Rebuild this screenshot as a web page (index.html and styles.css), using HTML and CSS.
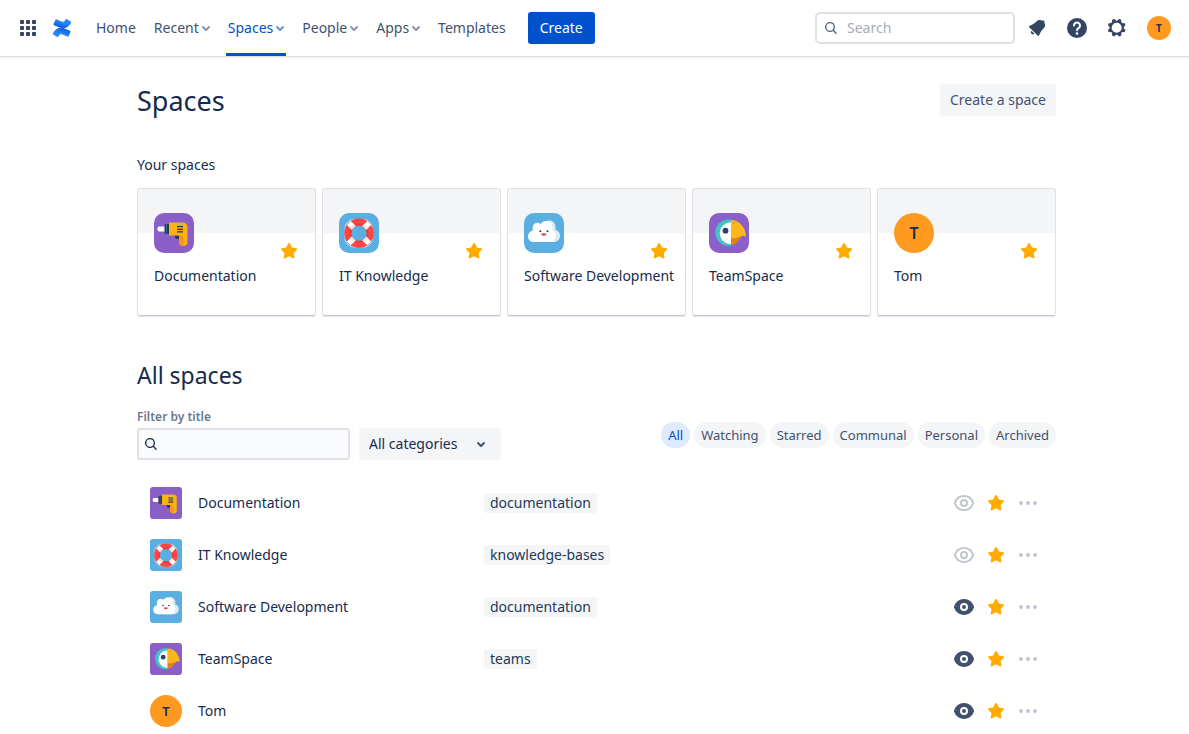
FILE: index.html
```
<!DOCTYPE html>
<html lang="en">
<head>
<meta charset="utf-8">
<meta name="viewport" content="width=device-width, initial-scale=1">
<title>Spaces</title>
<link rel="stylesheet" href="styles.css">
</head>
<body>
<svg class="sprite" aria-hidden="true">
  <defs>
    <linearGradient id="logo-a" x1="1" y1="0" x2="0.3" y2="1"><stop offset="0" stop-color="#0052cc"/><stop offset="0.7" stop-color="#2684ff"/></linearGradient>
    <linearGradient id="logo-b" x1="0" y1="1" x2="0.7" y2="0"><stop offset="0" stop-color="#0052cc"/><stop offset="0.7" stop-color="#2684ff"/></linearGradient>
    <clipPath id="beak-clip"><path d="M22 7c9 0 15 8 15 17-2-2-4-1-5 0-3 4-6 8-10 8z"/></clipPath>
  </defs>
  <symbol id="i-search" viewBox="0 0 24 24"><path d="M16.436 15.085l3.94 4.01a1 1 0 0 1-1.425 1.402l-3.938-4.006a7.5 7.5 0 1 1 1.423-1.406zM10.5 16a5.5 5.5 0 1 0 0-11 5.5 5.5 0 0 0 0 11z"/></symbol>
  <symbol id="i-chevron" viewBox="0 0 24 24"><path d="M8.292 10.293a1.009 1.009 0 0 0 0 1.419l2.939 2.965c.218.215.5.322.779.322s.556-.107.769-.322l2.93-2.955a1.01 1.01 0 0 0 0-1.419.987.987 0 0 0-1.406 0l-2.298 2.317-2.307-2.327a.99.99 0 0 0-1.406 0z"/></symbol>
  <symbol id="i-star" viewBox="0 0 24 24"><path d="M12.072 17.284l-3.905 2.053a1 1 0 0 1-1.451-1.054l.746-4.349-3.16-3.08a1 1 0 0 1 .554-1.705l4.366-.635 1.953-3.956a1 1 0 0 1 1.794 0l1.952 3.956 4.366.635a1 1 0 0 1 .555 1.705l-3.16 3.08.746 4.349a1 1 0 0 1-1.45 1.054l-3.906-2.053z"/></symbol>
  <symbol id="i-watch" viewBox="0 0 24 24"><path d="M12 5c4.300 0 7.700 2.800 8.900 6.500.1.300.1.700 0 1C19.700 16.200 16.300 19 12 19s-7.700-2.800-8.900-6.500c-.1-.3-.1-.7 0-1C4.300 7.800 7.700 5 12 5z" fill="none" stroke="currentColor" stroke-width="2"/><circle cx="12" cy="12" r="3" fill="none" stroke="currentColor" stroke-width="2"/></symbol>
  <symbol id="i-watching" viewBox="0 0 24 24"><path d="M12 4c4.900 0 8.600 3.200 9.900 7.400.1.400.1.800 0 1.200C20.600 16.800 16.900 20 12 20s-8.600-3.200-9.900-7.400c-.1-.4-.1-.8 0-1.200C3.400 7.200 7.100 4 12 4z"/><circle cx="12" cy="12" r="3" fill="none" stroke="#fff" stroke-width="2"/></symbol>
  <symbol id="i-more" viewBox="0 0 24 24"><circle cx="5" cy="12" r="2"/><circle cx="12" cy="12" r="2"/><circle cx="19" cy="12" r="2"/></symbol>

  <symbol id="a-drill" viewBox="0 0 40 40">
    <rect width="40" height="40" fill="#8a5fc8"/>
    <path d="M3 16l1.500-2.400H11v5H4.500z" fill="#fff"/><path d="M5.500 18l2-4M8.500 18l2-4" stroke="#d9d0ea" stroke-width="0.6"/>
    <path d="M10.500 12l1-1H15v10h-3.500l-1-1z" fill="#253858"/><path d="M12.500 11v10" stroke="#3e6288"/>
    <path d="M21 22.500h4V26h-1.500c-1 0-2.500-1-2.500-2z" fill="#253858"/>
    <path d="M15 9.500h14a4.500 4.500 0 0 1 4.500 4.500v15c0 2.500-1.500 4-4 4s-4.500-1.500-4.500-4v-6.500H15z" fill="#fcb211"/>
    <path d="M25 22.500h3.500c1 1 1 3 1 5V33c-2.500 0-4.500-1.500-4.500-4z" fill="#f7941e"/>
    <path d="M23 13.700h6M23 16.300h6M23 18.900h6" stroke="#253858" stroke-width="1.300"/>
  </symbol>
  <symbol id="a-ring" viewBox="0 0 40 40">
    <rect width="40" height="40" fill="#59afe1"/>
    <g fill="none">
      <rect x="6" y="6.500" width="27.500" height="27.500" rx="9" stroke="#c7e5f6" stroke-width="1"/>
      <circle cx="20" cy="20.200" r="11" stroke="#ff4646" stroke-width="7.400"/>
      <circle cx="20" cy="20.200" r="8.500" stroke="#e93c3f" stroke-width="2.400"/>
      <path d="M14.700 14.900l-4.900-4.900M25.300 14.900l4.900-4.900M14.700 25.500l-4.900 4.900M25.300 25.500l4.900 4.900" stroke="#fff" stroke-width="5.500"/>
      <path d="M14.700 14.900l-1.800-1.800M25.300 14.900l1.800-1.800M14.700 25.500l-1.800 1.800M25.300 25.500l1.800 1.800" stroke="#f2dfe1" stroke-width="5.500"/>
    </g>
    <circle cx="20" cy="20.200" r="7.500" fill="#59afe1"/>
  </symbol>
  <symbol id="a-cloud" viewBox="0 0 40 40">
    <rect width="40" height="40" fill="#59afe1"/>
    <path d="M18 12c2-3 5-5 8-4.500 4 .5 6.500 4 5.500 9.500 3 .5 4.500 3 4.500 5.500 0 4-2.500 6.500-6 6.500H18z" fill="#d9eaf5"/>
    <path d="M9.500 29C6 29 4 26 4 23.500c0-3 2-5.500 4.800-5.800C8 13 10 10 13 9.800c1.500 0 2.500.4 3.500 1.200C18.500 8.500 20.500 8 23 8c4.500 0 6 4.500 5.500 9 2.500 1 3.500 3.500 3 6-.5 4-2.500 6-5 6z" fill="#fff"/>
    <circle cx="16.300" cy="18.200" r="1" fill="#253858"/><circle cx="23.500" cy="18.200" r="1" fill="#253858"/>
    <path d="M17.300 20.500h5c0 3-5 3-5 0z" fill="#e5353b"/>
  </symbol>
  <symbol id="a-bird" viewBox="0 0 40 40">
    <rect width="40" height="40" fill="#8a5fc8"/>
    <path d="M22 6.500h-2.500a13.200 13.200 0 0 0 0 26.400H22z" fill="#43c3c4"/>
    <path d="M22 9.500h-1.500a10.800 10.800 0 0 0 0 21.500H22z" fill="#fff"/>
    <path d="M22 7c9 0 15 8 15 17-2-2-4-1-5 0-3 4-6 8-10 8z" fill="#fcb81a"/>
    <path clip-path="url(#beak-clip)" d="M21 24.500c3 1.500 7 1 11-1.500v10H21z" fill="#e27e17"/>
    <circle cx="16.500" cy="17.700" r="2.900" fill="#253f6e"/><circle cx="25" cy="9.800" r="0.900" fill="#ee8a17"/>
  </symbol>
</svg>

<header class="topbar">
  <button class="icon-button" type="button" aria-label="Switch to">
    <svg class="icon-24" viewBox="0 0 24 24"><rect x="4" y="4" width="4" height="4" rx="1"/><rect x="10" y="4" width="4" height="4" rx="1"/><rect x="16" y="4" width="4" height="4" rx="1"/><rect x="4" y="10" width="4" height="4" rx="1"/><rect x="10" y="10" width="4" height="4" rx="1"/><rect x="16" y="10" width="4" height="4" rx="1"/><rect x="4" y="16" width="4" height="4" rx="1"/><rect x="10" y="16" width="4" height="4" rx="1"/><rect x="16" y="16" width="4" height="4" rx="1"/></svg>
  </button>
  <a class="logo" href="#" aria-label="Confluence home">
    <svg class="logo-mark" viewBox="-0.500 -0.500 25 25"><path fill="url(#logo-a)" stroke="url(#logo-a)" stroke-width="1.400" d="M.87 18.257c-.248.382-.53.875-.763 1.245a.764.764 0 0 0 .255 1.040l4.965 3.054a.764.764 0 0 0 1.058-.26c.199-.332.454-.763.733-1.221 1.967-3.247 3.945-2.853 7.508-1.146l4.957 2.337a.764.764 0 0 0 1.028-.382l2.364-5.346a.764.764 0 0 0-.382-1 599.851 599.851 0 0 1-4.965-2.361C10.911 10.970 5.224 11.185.87 18.257z"/><path fill="url(#logo-b)" stroke="url(#logo-b)" stroke-width="1.400" d="M23.131 5.743c.249-.405.531-.875.764-1.250a.764.764 0 0 0-.256-1.034L18.675.404a.764.764 0 0 0-1.058.26c-.195.335-.451.763-.734 1.225-1.966 3.246-3.945 2.850-7.508 1.146L4.437.694a.764.764 0 0 0-1.027.382L1.046 6.422a.764.764 0 0 0 .382 1c1.039.49 3.105 1.467 4.965 2.361 6.698 3.246 12.392 3.029 16.738-4.040z"/></svg>
  </a>
  <nav class="nav" aria-label="Main">
    <a class="nav-item" href="#">Home</a>
    <button class="nav-item" type="button">Recent<svg class="nav-chevron"><use href="#i-chevron"/></svg></button>
    <button class="nav-item nav-item-active" type="button">Spaces<svg class="nav-chevron"><use href="#i-chevron"/></svg></button>
    <button class="nav-item" type="button">People<svg class="nav-chevron"><use href="#i-chevron"/></svg></button>
    <button class="nav-item" type="button">Apps<svg class="nav-chevron"><use href="#i-chevron"/></svg></button>
    <a class="nav-item" href="#">Templates</a>
  </nav>
  <button class="button button-primary" type="button">Create</button>
  <div class="tools">
    <label class="search">
      <svg class="search-icon"><use href="#i-search"/></svg>
      <input class="search-input" type="search" placeholder="Search" aria-label="Search">
    </label>
    <button class="icon-button" type="button" aria-label="Notifications"><svg class="icon-24" viewBox="0 0 24 24"><path d="M6.485 17.669a2 2 0 0 0 2.829 0l-2.829-2.830a2 2 0 0 0 0 2.830zm4.897-12.191l-.725.725c-.782.782-2.210 1.813-3.206 2.311l-3.017 1.509c-.495.248-.584.774-.187 1.171l8.556 8.556c.398.396.922.313 1.171-.188l1.510-3.016c.494-.988 1.526-2.420 2.311-3.206l.725-.726a5.048 5.048 0 0 0 .64-6.356 1.010 1.010 0 1 0-1.354-1.494c-.023.025-.046.049-.066.075a5.043 5.043 0 0 0-2.788-.84 5.036 5.036 0 0 0-3.570 1.478z"/></svg></button>
    <button class="icon-button" type="button" aria-label="Help"><svg class="icon-24" viewBox="0 0 24 24"><circle cx="12" cy="12" r="10"/><path d="M9 9.500a3 3 0 1 1 4.500 2.600c-1 .6-1.500 1-1.500 2.200" fill="none" stroke="#fff" stroke-width="2" stroke-linecap="round"/><circle cx="12" cy="17.500" r="1.300" fill="#fff"/></svg></button>
    <button class="icon-button" type="button" aria-label="Settings"><svg class="icon-24" viewBox="0 0 24 24"><path fill-rule="evenodd" d="M11.701 16.700a5.002 5.002 0 1 1 0-10.003 5.002 5.002 0 0 1 0 10.004m8.368-3.117a1.995 1.995 0 0 1-1.346-1.885c0-.876.563-1.613 1.345-1.885a.48.48 0 0 0 .315-.574 8.947 8.947 0 0 0-.836-1.993.477.477 0 0 0-.598-.195 2.040 2.040 0 0 1-1.290.08 1.988 1.988 0 0 1-1.404-1.395 2.040 2.040 0 0 1 .076-1.297.478.478 0 0 0-.196-.597 8.980 8.980 0 0 0-1.975-.826.479.479 0 0 0-.574.314 1.995 1.995 0 0 1-1.885 1.346 1.994 1.994 0 0 1-1.884-1.345.482.482 0 0 0-.575-.315c-.708.2-1.379.485-2.004.842a.47.47 0 0 0-.198.582A2.002 2.002 0 0 1 4.445 7.060a.478.478 0 0 0-.595.196 8.946 8.946 0 0 0-.833 1.994.48.48 0 0 0 .308.572 1.995 1.995 0 0 1 1.323 1.877c0 .867-.552 1.599-1.324 1.877a.479.479 0 0 0-.308.57 8.990 8.990 0 0 0 .723 1.790.477.477 0 0 0 .624.194c.595-.273 1.343-.264 2.104.238.117.077.225.185.302.3.527.8.512 1.580.198 2.188a.473.473 0 0 0 .168.628 8.946 8.946 0 0 0 2.110.897.474.474 0 0 0 .57-.313 1.995 1.995 0 0 1 1.886-1.353c.878 0 1.618.567 1.887 1.353a.475.475 0 0 0 .57.313 8.964 8.964 0 0 0 2.084-.883.473.473 0 0 0 .167-.631c-.318-.608-.337-1.393.191-2.195.077-.116.185-.225.302-.302.772-.511 1.527-.513 2.125-.23a.477.477 0 0 0 .628-.19 8.925 8.925 0 0 0 .728-1.793.478.478 0 0 0-.314-.573"/></svg></button>
    <button class="profile" type="button" aria-label="Your profile">T</button>
  </div>
</header>

<main class="page">
  <div class="page-head">
    <h1 class="title">Spaces</h1>
    <button class="button" type="button">Create a space</button>
  </div>

  <section>
    <h2 class="subtitle">Your spaces</h2>
    <div class="cards">
      <article class="card">
        <svg class="avatar avatar-card"><use href="#a-drill"/></svg>
        <button class="star card-star" type="button" aria-label="Unstar Documentation"><svg class="icon-24"><use href="#i-star"/></svg></button>
        <a class="card-name" href="#">Documentation</a>
      </article>
      <article class="card">
        <svg class="avatar avatar-card"><use href="#a-ring"/></svg>
        <button class="star card-star" type="button" aria-label="Unstar IT Knowledge"><svg class="icon-24"><use href="#i-star"/></svg></button>
        <a class="card-name" href="#">IT Knowledge</a>
      </article>
      <article class="card">
        <svg class="avatar avatar-card"><use href="#a-cloud"/></svg>
        <button class="star card-star" type="button" aria-label="Unstar Software Development"><svg class="icon-24"><use href="#i-star"/></svg></button>
        <a class="card-name" href="#">Software Development</a>
      </article>
      <article class="card">
        <svg class="avatar avatar-card"><use href="#a-bird"/></svg>
        <button class="star card-star" type="button" aria-label="Unstar TeamSpace"><svg class="icon-24"><use href="#i-star"/></svg></button>
        <a class="card-name" href="#">TeamSpace</a>
      </article>
      <article class="card">
        <span class="avatar avatar-card avatar-letter">T</span>
        <button class="star card-star" type="button" aria-label="Unstar Tom"><svg class="icon-24"><use href="#i-star"/></svg></button>
        <a class="card-name" href="#">Tom</a>
      </article>
    </div>
  </section>

  <section>
    <h2 class="section-title">All spaces</h2>
    <div class="filters">
      <div class="filter-fields">
        <div class="field">
          <label class="field-label" for="title-filter">Filter by title</label>
          <div class="filter-box">
            <svg class="filter-icon"><use href="#i-search"/></svg>
            <input class="filter-input" id="title-filter" type="text">
          </div>
        </div>
        <div class="select-box">
          <select class="select" aria-label="Categories"><option>All categories</option></select>
          <svg class="select-chevron"><use href="#i-chevron"/></svg>
        </div>
      </div>
      <div class="pills">
        <button class="pill pill-active" type="button">All</button>
        <button class="pill" type="button">Watching</button>
        <button class="pill" type="button">Starred</button>
        <button class="pill" type="button">Communal</button>
        <button class="pill" type="button">Personal</button>
        <button class="pill" type="button">Archived</button>
      </div>
    </div>

    <table class="spaces">
      <tbody>
        <tr>
          <td class="cell-avatar"><svg class="avatar avatar-row"><use href="#a-drill"/></svg></td>
          <td class="cell-name"><a href="#">Documentation</a></td>
          <td><a class="tag" href="#">documentation</a></td>
          <td class="cell-actions"><div class="actions"><button class="watch" type="button" aria-label="Watch"><svg class="icon-24"><use href="#i-watch"/></svg></button><button class="star" type="button" aria-label="Unstar"><svg class="icon-24"><use href="#i-star"/></svg></button><button class="more" type="button" aria-label="More"><svg class="icon-24"><use href="#i-more"/></svg></button></div></td>
        </tr>
        <tr>
          <td class="cell-avatar"><svg class="avatar avatar-row"><use href="#a-ring"/></svg></td>
          <td class="cell-name"><a href="#">IT Knowledge</a></td>
          <td><a class="tag" href="#">knowledge-bases</a></td>
          <td class="cell-actions"><div class="actions"><button class="watch" type="button" aria-label="Watch"><svg class="icon-24"><use href="#i-watch"/></svg></button><button class="star" type="button" aria-label="Unstar"><svg class="icon-24"><use href="#i-star"/></svg></button><button class="more" type="button" aria-label="More"><svg class="icon-24"><use href="#i-more"/></svg></button></div></td>
        </tr>
        <tr>
          <td class="cell-avatar"><svg class="avatar avatar-row"><use href="#a-cloud"/></svg></td>
          <td class="cell-name"><a href="#">Software Development</a></td>
          <td><a class="tag" href="#">documentation</a></td>
          <td class="cell-actions"><div class="actions"><button class="watch watch-on" type="button" aria-label="Stop watching"><svg class="icon-24"><use href="#i-watching"/></svg></button><button class="star" type="button" aria-label="Unstar"><svg class="icon-24"><use href="#i-star"/></svg></button><button class="more" type="button" aria-label="More"><svg class="icon-24"><use href="#i-more"/></svg></button></div></td>
        </tr>
        <tr>
          <td class="cell-avatar"><svg class="avatar avatar-row"><use href="#a-bird"/></svg></td>
          <td class="cell-name"><a href="#">TeamSpace</a></td>
          <td><a class="tag" href="#">teams</a></td>
          <td class="cell-actions"><div class="actions"><button class="watch watch-on" type="button" aria-label="Stop watching"><svg class="icon-24"><use href="#i-watching"/></svg></button><button class="star" type="button" aria-label="Unstar"><svg class="icon-24"><use href="#i-star"/></svg></button><button class="more" type="button" aria-label="More"><svg class="icon-24"><use href="#i-more"/></svg></button></div></td>
        </tr>
        <tr>
          <td class="cell-avatar"><span class="avatar avatar-row avatar-letter">T</span></td>
          <td class="cell-name"><a href="#">Tom</a></td>
          <td></td>
          <td class="cell-actions"><div class="actions"><button class="watch watch-on" type="button" aria-label="Stop watching"><svg class="icon-24"><use href="#i-watching"/></svg></button><button class="star" type="button" aria-label="Unstar"><svg class="icon-24"><use href="#i-star"/></svg></button><button class="more" type="button" aria-label="More"><svg class="icon-24"><use href="#i-more"/></svg></button></div></td>
        </tr>
      </tbody>
    </table>
  </section>
</main>
</body>
</html>
```

FILE: styles.css
```
*, *::before, *::after { box-sizing: border-box; }

body {
  margin: 0;
  background: #fff;
  color: #172b4d;
  font: 14px/20px "Droid Sans", "Noto Sans", sans-serif;
}

button, input, select {
  margin: 0;
  border: 0;
  padding: 0;
  background: none;
  color: inherit;
  font: inherit;
}

button { cursor: pointer; }
a { color: inherit; text-decoration: none; }
h1, h2 { margin: 0; font-weight: 400; }
svg { display: block; fill: currentColor; }

.sprite { position: absolute; width: 0; height: 0; }
.icon-24 { width: 24px; height: 24px; }

/* Top bar */
.topbar {
  display: flex;
  align-items: center;
  height: 56px;
  padding: 0 18px 0 12px;
  background: #fff;
  box-shadow: 0 1px 1px #dcdfe5, 0 2px 3px #eef0f3;
  color: #344563;
}

.icon-button {
  display: grid;
  place-items: center;
  width: 32px;
  height: 32px;
}

.logo { margin-left: 9px; }
.logo-mark { width: 18px; height: 18px; }

.nav {
  display: flex;
  align-self: stretch;
  gap: 14px;
  margin-left: 23px;
}

.nav-item {
  display: flex;
  align-items: center;
  padding: 0 2px;
  color: #42526e;
}

.nav-item-active {
  color: #0052cc;
  box-shadow: inset 0 -3px #0052cc;
}

.nav-chevron {
  width: 24px;
  height: 24px;
  margin: 0 -8px 0 -5px;
  opacity: 0.6;
}

.button {
  height: 32px;
  padding: 0 10px;
  border-radius: 3px;
  background: #f4f5f7;
  color: #42526e;
}

.button-primary {
  margin-left: 20px;
  padding: 0 12px;
  background: #0052cc;
  color: #fff;
}

.tools {
  display: flex;
  align-items: center;
  gap: 8px;
  margin-left: auto;
}

.search {
  display: flex;
  align-items: center;
  width: 200px;
  height: 32px;
  margin-right: -2px;
  border: 2px solid #dfe1e6;
  border-radius: 5px;
  padding-left: 6px;
}

.search-icon { width: 16px; height: 16px; color: #505f79; }
.search-input { flex: 1; min-width: 0; padding-left: 8px; outline: 0; }
.search-input::placeholder { color: #a5adba; opacity: 1; }

.profile {
  width: 24px;
  height: 24px;
  margin-left: 6px;
  border-radius: 50%;
  background: #ff991f;
  color: #253858;
  font-size: 10px;
  font-weight: 700;
  line-height: 24px;
}

/* Page */
.page {
  max-width: 923px;
  margin: 0 auto;
  padding: 28px 0 0 4px;
}

.page-head {
  display: flex;
  align-items: flex-start;
  justify-content: space-between;
}

.title { font-size: 27px; line-height: 34px; }
.subtitle { margin: 37px 0 13px; font-size: 14px; line-height: 20px; }
.section-title { margin: 43px 0 18px; font-size: 23px; line-height: 32px; }

/* Space cards */
.cards {
  display: grid;
  grid-template-columns: repeat(5, 1fr);
  gap: 6px;
}

.card {
  display: grid;
  grid-template-columns: 1fr auto;
  align-content: start;
  min-height: 128px;
  border: 1px solid #dfe1e6;
  border-bottom-color: #c1c7d0;
  border-radius: 3px;
  padding: 24px 14px 16px 16px;
  background: linear-gradient(#f4f5f7 44px, #fff 44px);
  box-shadow: 0 1px 1px #e3e6ea;
}

.card-star { align-self: end; margin-bottom: -10px; }
.card-name { grid-column: 1 / -1; margin-top: 13px; white-space: nowrap; }
.star { color: #ffab00; }

.avatar { overflow: hidden; }
.avatar-card { width: 40px; height: 40px; border-radius: 10px; font-size: 16px; line-height: 40px; }
.avatar-row { width: 32px; height: 32px; border-radius: 3px; font-size: 13px; line-height: 32px; }

.avatar-letter {
  display: block;
  border-radius: 50%;
  background: #ff991f;
  font-weight: 600;
  text-align: center;
}

/* Filters */
.filters {
  display: flex;
  align-items: center;
  justify-content: space-between;
}

.filter-fields {
  display: flex;
  align-items: flex-end;
  gap: 9px;
}

.field-label {
  display: block;
  margin-bottom: 3px;
  color: #6b778c;
  font-size: 12px;
  font-weight: 600;
  line-height: 16px;
}

.filter-box {
  display: flex;
  align-items: center;
  width: 213px;
  height: 32px;
  border: 2px solid #dfe1e6;
  border-radius: 3px;
  padding-left: 4px;
  background: #fafbfc;
}

.filter-icon { width: 16px; height: 16px; }
.filter-input { flex: 1; min-width: 0; padding: 0 6px; outline: 0; }

.select-box {
  display: grid;
  grid-template-columns: 1fr 32px;
  align-items: center;
  width: 142px;
  border-radius: 3px;
  background: #f4f5f7;
}

.select {
  grid-area: 1 / 1 / 2 / 3;
  height: 32px;
  padding: 0 32px 0 10px;
  appearance: none;
}

.select-chevron {
  grid-area: 1 / 2;
  width: 24px;
  height: 24px;
  color: #42526e;
  pointer-events: none;
}

.pills { display: flex; gap: 4px; }

.pill {
  height: 26px;
  border-radius: 13px;
  padding: 0 7px;
  background: #f4f5f7;
  color: #42526e;
  font-size: 13px;
}

.pill-active { background: #deebff; color: #0052cc; }

/* Space list */
.spaces {
  width: 100%;
  margin-top: 17px;
  border-collapse: collapse;
  table-layout: fixed;
}

.spaces td { padding: 10px 0; vertical-align: middle; }
.spaces tr:last-child td { padding-bottom: 0; }
.spaces .cell-avatar { width: 61px; padding-left: 13px; }
.cell-name { width: 286px; }
.cell-actions { width: 120px; }

.tag {
  display: inline-block;
  border-radius: 3px;
  padding: 0 6px;
  background: #f4f5f7;
  color: #253858;
}

.actions {
  display: flex;
  justify-content: flex-end;
  gap: 8px;
  padding-right: 16px;
}

.watch, .more { color: #c1c7d0; }
.watch-on { color: #42526e; }
```
